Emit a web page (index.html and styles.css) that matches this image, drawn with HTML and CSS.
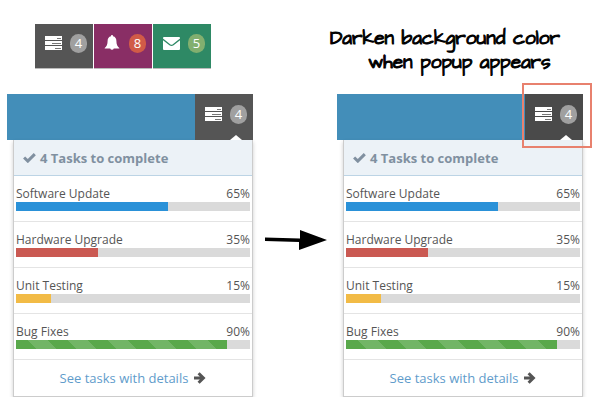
FILE: index.html
```html
<!DOCTYPE html>
<html lang="en">
<head>
    <meta charset="UTF-8">
    <meta name="viewport" content="width=device-width, initial-scale=1.0">
    <title>Tasks popup</title>
    <link rel="stylesheet" href="styles.css">
</head>
<body>
    <!-- Shared icons -->
    <svg class="sprite" aria-hidden="true">
        <symbol id="icon-tasks" viewBox="0 0 17 14">
            <path fill="#fff" d="M0 0h17v4H0zM0 5h17v4H0zM0 10h17v4H0z"/>
            <path fill="#777" d="M12 2h4v1h-4zM7 7h9v1H7zM10 12h6v1h-6z"/>
        </symbol>
        <symbol id="icon-bell" viewBox="0 0 16 16">
            <path fill="#fff" d="M8 0c.7 0 1 .4 1 1.200C11.300 1.700 12.400 3.500 12.400 6c0 3.500 1 5.400 2.900 6.900v.6H9.800a1.900 1.900 0 0 1-3.600 0H.7v-.6C2.600 11.400 3.600 9.500 3.600 6 3.600 3.500 4.700 1.700 7 1.200 7 .4 7.300 0 8 0z"/>
        </symbol>
        <symbol id="icon-mail" viewBox="0 0 17 13">
            <path fill="#fff" d="M1 0h15q1 0 1 1v.6L9.800 7.200q-1.300 1-2.600 0L0 1.600V1q0-1 1-1zM0 3.300l6.400 5q2.100 1.500 4.200 0l6.400-5V12q0 1-1 1H1q-1 0-1-1z"/>
        </symbol>
        <symbol id="icon-check" viewBox="0 0 13 10">
            <path fill="none" stroke="currentColor" stroke-width="3" d="M1.100 4.500l3.700 3.600 7-7"/>
        </symbol>
        <symbol id="icon-arrow" viewBox="0 0 12 12">
            <path fill="none" stroke="currentColor" stroke-width="3" d="M0 6h9M4.600 1.200L9.400 6l-4.800 4.800"/>
        </symbol>
    </svg>

    <main class="board">
        <nav class="top-nav">
            <button class="nav-item grey" aria-label="Tasks"><svg class="icon-tasks"><use href="#icon-tasks"/></svg><span class="badge">4</span></button>
            <button class="nav-item purple" aria-label="Notifications"><svg class="icon-bell"><use href="#icon-bell"/></svg><span class="badge badge-important">8</span></button>
            <button class="nav-item green" aria-label="Messages"><svg class="icon-mail"><use href="#icon-mail"/></svg><span class="badge badge-success">5</span></button>
        </nav>

        <p class="note">Darken background color <span>when popup appears</span></p>

        <section class="panel">
            <div class="navbar">
                <button class="nav-item grey open" aria-label="Tasks"><svg class="icon-tasks"><use href="#icon-tasks"/></svg><span class="badge">4</span></button>
            </div>
            <div class="dropdown">
                <h2><svg class="icon-check"><use href="#icon-check"/></svg>4 Tasks to complete</h2>
                <ul>
                    <li>
                        <div class="task"><span>Software Update</span><span>65%</span></div>
                        <div class="progress"><div class="bar blue" style="width: 65%"></div></div>
                    </li>
                    <li>
                        <div class="task"><span>Hardware Upgrade</span><span>35%</span></div>
                        <div class="progress"><div class="bar red" style="width: 35%"></div></div>
                    </li>
                    <li>
                        <div class="task"><span>Unit Testing</span><span>15%</span></div>
                        <div class="progress"><div class="bar yellow" style="width: 15%"></div></div>
                    </li>
                    <li>
                        <div class="task"><span>Bug Fixes</span><span>90%</span></div>
                        <div class="progress"><div class="bar striped" style="width: 90%"></div></div>
                    </li>
                </ul>
                <a class="details" href="#">See tasks with details<svg class="icon-arrow"><use href="#icon-arrow"/></svg></a>
            </div>
        </section>

        <svg class="arrow" viewBox="0 0 62 20" aria-hidden="true">
            <path d="M0 7.500L35 8.500V0L62 10 34 20V12L0 11z"/>
        </svg>

        <section class="panel">
            <div class="navbar">
                <button class="nav-item dark open highlight" aria-label="Tasks"><svg class="icon-tasks"><use href="#icon-tasks"/></svg><span class="badge">4</span></button>
            </div>
            <div class="dropdown">
                <h2><svg class="icon-check"><use href="#icon-check"/></svg>4 Tasks to complete</h2>
                <ul>
                    <li>
                        <div class="task"><span>Software Update</span><span>65%</span></div>
                        <div class="progress"><div class="bar blue" style="width: 65%"></div></div>
                    </li>
                    <li>
                        <div class="task"><span>Hardware Upgrade</span><span>35%</span></div>
                        <div class="progress"><div class="bar red" style="width: 35%"></div></div>
                    </li>
                    <li>
                        <div class="task"><span>Unit Testing</span><span>15%</span></div>
                        <div class="progress"><div class="bar yellow" style="width: 15%"></div></div>
                    </li>
                    <li>
                        <div class="task"><span>Bug Fixes</span><span>90%</span></div>
                        <div class="progress"><div class="bar striped" style="width: 90%"></div></div>
                    </li>
                </ul>
                <a class="details" href="#">See tasks with details<svg class="icon-arrow"><use href="#icon-arrow"/></svg></a>
            </div>
        </section>
    </main>
</body>
</html>
```
FILE: styles.css
```css
* {
    box-sizing: border-box;
}

body {
    margin: 0;
    background: #fff;
    color: #555;
    font-family: "Open Sans", sans-serif;
    font-size: 13px;
    line-height: 18px;
}

.sprite {
    position: absolute;
    width: 0;
    height: 0;
}

.board {
    display: grid;
    grid-template-columns: 1fr 84px 1fr;
    padding: 24px 13px 0 7px;
}

/* Top row */
.top-nav {
    display: flex;
    align-items: flex-start;
    gap: 1px;
    height: 70px;
    padding-left: 28px;
}

.top-nav .nav-item {
    height: 45px;
    padding-bottom: 6px;
    border-bottom: 1px solid #bbb;
}

.note {
    grid-column: 2 / 4;
    margin: 0 0 0 77px;
    color: #000;
    font-family: "Architects Daughter", "Comic Sans MS", Lato, sans-serif;
    font-size: 19px;
    -webkit-text-stroke: 1px #000;
    line-height: 24px;
    padding-top: 3px;
    white-space: nowrap;
}

.note span {
    display: block;
    padding-left: 38px;
}

/* Nav buttons */
.nav-item {
    position: relative;
    display: flex;
    align-items: center;
    justify-content: space-between;
    width: 58px;
    height: 46px;
    padding: 0 6px 6px 10px;
    border: none;
    color: #fff;
    font-family: inherit;
    cursor: pointer;
}

.grey {
    background: #555;
}

.dark {
    background: #4a4a4a;
}

.purple {
    background: #892e65;
}

.green {
    background: #2e8965;
}

.badge {
    width: 17px;
    height: 19px;
    border-radius: 9px;
    background: #a0a0a0;
    font-size: 13px;
    line-height: 18px;
    text-align: center;
}

.badge-important {
    background: #d15b47;
}

.badge-success {
    background: #82af6f;
}

.icon-tasks {
    width: 17px;
    height: 14px;
}

.icon-bell {
    width: 16px;
    height: 16px;
}

.icon-mail {
    width: 17px;
    height: 13px;
}

/* Popup panel */
.navbar {
    display: flex;
    justify-content: flex-end;
    background: #438eb9;
}

.open::after {
    content: "";
    position: absolute;
    right: 11px;
    bottom: 0;
    border: 6px solid transparent;
    border-top: none;
    border-bottom: 5px solid #fff;
}

.highlight::before {
    content: "";
    position: absolute;
    inset: -11px -9px -8px -3px;
    border: 2px solid #e8816e;
    z-index: 1;
}

.dropdown {
    margin-left: 6px;
    border: 1px solid #ccc;
    border-top: none;
    background: #fff;
    box-shadow: 0 2px 4px rgba(0, 0, 0, 0.2);
}

.dropdown h2 {
    display: flex;
    align-items: center;
    gap: 4px;
    height: 36px;
    margin: 0;
    padding: 0 9px;
    border-bottom: 1px solid #bcd4e5;
    background: #ecf2f7;
    color: #8090a0;
    font-size: 13px;
    font-weight: 700;
}

.icon-check {
    width: 13px;
    height: 10px;
}

.dropdown ul {
    margin: 0;
    padding: 0;
    list-style: none;
}

.dropdown li {
    padding: 10px 2px;
    border-bottom: 1px solid #e4e4e4;
}

.task {
    display: flex;
    justify-content: space-between;
    font-size: 12px;
    line-height: 16px;
}

.progress {
    height: 9px;
    background: #dadada;
}

.bar {
    height: 100%;
}

.blue {
    background: #2a91d8;
}

.red {
    background: #ca5952;
}

.yellow {
    background: #f2bb46;
}

.striped {
    background-color: #59a84b;
    background-image: linear-gradient(45deg, rgba(255, 255, 255, 0.15) 25%, transparent 25%, transparent 50%, rgba(255, 255, 255, 0.15) 50%, rgba(255, 255, 255, 0.15) 75%, transparent 75%);
    background-position: 12px 0;
    background-size: 40px 40px;
}

.details {
    display: flex;
    align-items: center;
    justify-content: center;
    gap: 6px;
    height: 36px;
    color: #5f9ccb;
    text-decoration: none;
}

.icon-arrow {
    width: 12px;
    height: 12px;
    color: #555;
}

.arrow {
    width: 62px;
    height: 20px;
    margin: 136px 0 0 12px;
}
```
